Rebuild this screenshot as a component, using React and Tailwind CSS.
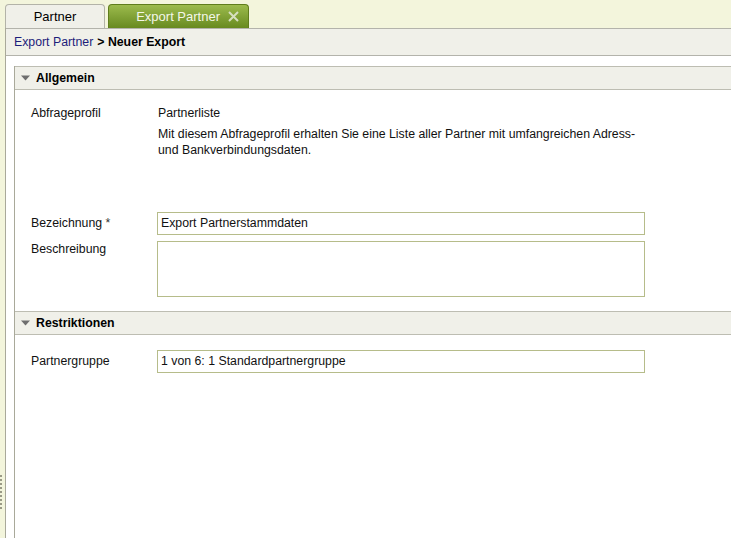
import React from 'react';

/* ── Small triangle used in section headers ── */
const Caret = () => (
  <svg width="9" height="6" viewBox="0 0 9 6" className="mr-[6px]">
    <path d="M0 0.5 L9 0.5 L4.5 5.5 Z" fill="#6e6e6e" />
  </svg>
);

const SectionHeader = ({ title }) => (
  <div className="h-[24px] bg-[#f0f0e9] border-y border-[#bdbdb2] flex items-center pl-[6px]">
    <Caret />
    <span className="font-bold text-black">{title}</span>
  </div>
);

const Field = ({ value, className = 'h-[23px]' }) => (
  <div className={`w-[488px] border border-[#b6bc8a] bg-white px-[3px] flex items-start pt-[3px] leading-[15px] ${className}`}>
    {value}
  </div>
);

export default function App() {
  return (
    <div className="w-[731px] h-[538px] bg-[#f3f5dc] flex flex-col overflow-hidden text-[12.3px] text-[#111] font-['Liberation_Sans',Arial,sans-serif]">
      {/* ── Tab bar ── */}
      <div className="h-[28px] flex items-end pl-[5px] gap-[3px] shrink-0">
        <div className="w-[100px] h-[24px] bg-[#f0f0e9] border border-b-0 border-[#b3b3a8] rounded-t-[4px] flex items-center justify-center text-[13px] text-black">
          Partner
        </div>
        <div className="w-[141px] h-[24px] rounded-t-[4px] border border-b-0 border-[#5f7d1c] bg-gradient-to-b from-[#9cbb4c] to-[#688a1f] flex items-center justify-end pr-[9px] gap-[8px] text-[13px] text-[#f4f7e8]">
          <span>Export Partner</span>
          <svg width="11" height="11" viewBox="0 0 11 11">
            <path d="M1 1 L10 10 M10 1 L1 10" stroke="#d6dfc0" strokeWidth="2" />
          </svg>
        </div>
      </div>

      {/* ── Main frame ── */}
      <div className="flex-1 flex relative">
        <div className="w-[5px] shrink-0 flex flex-col items-start pt-[447px] gap-[2px]">
          {Array.from({ length: 9 }).map((_, i) => (
            <span key={i} className="block w-[2px] h-[2px] bg-[#9a9a86]" />
          ))}
        </div>
        <div className="flex-1 bg-white border-l border-[#a9a99a] flex flex-col">
          {/* breadcrumb */}
          <div className="h-[28px] bg-[#f0f0e9] border-y border-[#b3b3ab] flex items-center pl-[8px] shrink-0">
            <span className="text-[#1d1d7a]">Export Partner</span>
            <span className="font-bold text-black ml-[4px]">&gt; Neuer Export</span>
          </div>

          <div className="flex-1 pl-[8px] pt-[10px] flex">
            <div className="flex-1 border-l border-[#a9a99a] flex flex-col">
              <SectionHeader title="Allgemein" />

              <div className="pl-[16px] pt-[15px] flex flex-col">
                <div className="flex">
                  <div className="w-[127px] leading-[16px]">Abfrageprofil</div>
                  <div className="flex flex-col">
                    <div className="leading-[16px]">Partnerliste</div>
                    <div className="leading-[16px] mt-[5px] w-[490px]">
                      Mit diesem Abfrageprofil erhalten Sie eine Liste aller Partner mit umfangreichen Adress-
                      <br />
                      und Bankverbindungsdaten.
                    </div>
                  </div>
                </div>

                <div className="flex items-center mt-[54px]">
                  <div className="w-[126px]">Bezeichnung <span className="text-[#333]">*</span></div>
                  <Field value="Export Partnerstammdaten" />
                </div>

                <div className="flex mt-[6px]">
                  <div className="w-[126px] leading-[16px]">Beschreibung</div>
                  <Field value="" className="h-[56px]" />
                </div>
              </div>

              <div className="mt-[14px]">
                <SectionHeader title="Restriktionen" />
              </div>

              <div className="pl-[16px] pt-[15px]">
                <div className="flex items-center">
                  <div className="w-[126px]">Partnergruppe</div>
                  <Field value="1 von 6: 1 Standardpartnergruppe" />
                </div>
              </div>
            </div>
          </div>
        </div>
      </div>
    </div>
  );
}
